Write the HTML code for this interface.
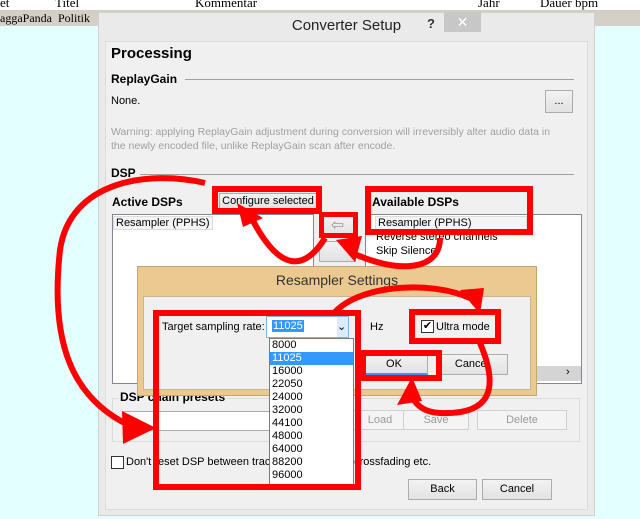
<!DOCTYPE html>
<html><head><meta charset="utf-8"><style>
*{margin:0;padding:0;box-sizing:border-box}
body{width:640px;height:519px;background:#e3ffff;position:relative;overflow:hidden;font-family:"Liberation Sans","DejaVu Sans",sans-serif;font-size:11px;color:#000}
.a{position:absolute;white-space:nowrap}
.btn{position:absolute;background:linear-gradient(#f2f2f2,#e2e2e2);border:1px solid #acacac;text-align:center;font-size:11px}
.dis{color:#9a9a9a;border-color:#d0d0d0;background:#f4f4f4}
.box{position:absolute;border:1px solid #828790;background:#fff}
.rb{position:absolute;border:6px solid #f00}
</style></head><body>
<div class="a" style="left:0;top:0;width:640px;height:11px;background:#fff;border-bottom:1px solid #ccc"></div>
<div class="a" style="left:0;top:-5px;font-family:'Liberation Serif',serif;font-size:13px">et</div>
<div class="a" style="left:55px;top:-5px;font-family:'Liberation Serif',serif;font-size:13px">Titel</div>
<div class="a" style="left:195px;top:-5px;font-family:'Liberation Serif',serif;font-size:13px">Kommentar</div>
<div class="a" style="left:478px;top:-5px;font-family:'Liberation Serif',serif;font-size:13px">Jahr</div>
<div class="a" style="left:540px;top:-5px;font-family:'Liberation Serif',serif;font-size:13px">Dauer bpm</div>
<div class="a" style="left:0;top:11px;width:640px;height:15px;background:#d4d0c8"></div>
<div class="a" style="left:0;top:11px;font-family:'Liberation Serif',serif;font-size:12px">aggaPanda&nbsp; Politik</div>

<div class="a" style="left:98px;top:12px;width:497px;height:504px;background:#eaeaea;border:1px solid #d0d0d0"></div>
<div class="a" style="left:98px;top:17px;width:497px;text-align:center;font-size:15px;color:#222">Converter Setup</div>
<div class="a" style="left:427px;top:16px;font-size:13px;font-weight:bold;color:#333">?</div>
<div class="a" style="left:444px;top:12px;width:37px;height:20px;background:#c7c7c7;color:#fff;text-align:center;font-size:14px;line-height:20px">✕</div>
<div class="a" style="left:105px;top:41px;width:483px;height:469px;background:#f0f0f0;border:1px solid #dcdcdc"></div>

<div class="a" style="left:111px;top:45px;font-size:15px;font-weight:bold">Processing</div>
<div class="a" style="left:111px;top:72px;font-size:12px;font-weight:bold">ReplayGain</div>
<div class="a" style="left:185px;top:79px;width:389px;height:1px;background:#a0a0a0"></div>
<div class="a" style="left:111px;top:95px">None.</div>
<div class="btn" style="left:545px;top:90px;width:28px;height:23px;line-height:20px">...</div>
<div class="a" style="left:111px;top:125px;color:#a0a0a0;font-size:10.5px;line-height:14px">Warning: applying ReplayGain adjustment during conversion will irreversibly alter audio data in<br>the newly encoded file, unlike ReplayGain scan after encode.</div>
<div class="a" style="left:111px;top:166px;font-size:12px;font-weight:bold">DSP</div>
<div class="a" style="left:140px;top:174px;width:434px;height:1px;background:#a0a0a0"></div>

<div class="a" style="left:112px;top:195px;font-size:12px;font-weight:bold">Active DSPs</div>
<div class="btn" style="left:219px;top:193px;width:98px;height:16px;line-height:14px">Configure selected</div>
<div class="a" style="left:372px;top:195px;font-size:12px;font-weight:bold">Available DSPs</div>
<div class="box" style="left:112px;top:214px;width:202px;height:170px"></div>
<div class="a" style="left:113px;top:216px;border:1px solid #ddd;background:#f4f4f4;padding:0 2px">Resampler (PPHS)</div>
<div class="box" style="left:365px;top:214px;width:217px;height:170px"></div>
<div class="a" style="left:375px;top:216px;width:152px;border:1px solid #ddd;background:#f4f4f4;padding:0 2px">Resampler (PPHS)</div>
<div class="a" style="left:376px;top:231px">Reverse stereo channels</div>
<div class="a" style="left:376px;top:245px">Skip Silence</div>
<div class="btn" style="left:319px;top:216px;width:37px;height:20px;color:#999;font-size:16px;line-height:17px">⇦</div>
<div class="btn" style="left:319px;top:241px;width:37px;height:21px"></div>
<div class="a" style="left:470px;top:366px;width:111px;height:15px;background:#d4d4d4"></div>
<div class="a" style="left:566px;top:366px;font-size:11px">›</div>

<div class="a" style="left:112px;top:398px;width:468px;height:44px;border:1px solid #dcdcdc"></div>
<div class="a" style="left:118px;top:390px;font-size:12px;font-weight:bold;background:#f0f0f0;padding:0 2px">DSP chain presets</div>
<div class="box" style="left:123px;top:411px;width:160px;height:20px;border-color:#abadb3"></div>
<div class="btn dis" style="left:350px;top:410px;width:60px;height:20px;line-height:18px">Load</div>
<div class="btn dis" style="left:403px;top:410px;width:66px;height:20px;line-height:18px">Save</div>
<div class="btn dis" style="left:477px;top:410px;width:90px;height:20px;line-height:18px">Delete</div>
<div class="a" style="left:111px;top:456px;width:13px;height:13px;border:1px solid #333;background:#fff"></div>
<div class="a" style="left:126px;top:456px">Don't reset DSP between tracks — needed for crossfading etc.</div>
<div class="btn" style="left:408px;top:479px;width:69px;height:21px;line-height:19px">Back</div>
<div class="btn" style="left:482px;top:479px;width:70px;height:21px;line-height:19px">Cancel</div>

<div class="a" style="left:137px;top:266px;width:400px;height:130px;background:#ebc991;border:1px solid #c4a673"></div>
<div class="a" style="left:137px;top:272px;width:400px;text-align:center;font-size:14px;color:#333">Resampler Settings</div>
<div class="a" style="left:143px;top:296px;width:388px;height:94px;background:#f0f0f0;border:1px solid #c8b590"></div>
<div class="a" style="left:162px;top:321px">Target sampling rate:</div>
<div class="a" style="left:266px;top:316px;width:83px;height:22px;background:#fff;border:1px solid #7eb4ea"></div>
<div class="a" style="left:272px;top:320px;background:#3399ff;color:#fff;padding:0 1px">11025</div>
<div class="a" style="left:337px;top:317px;width:11px;height:20px;background:#dcecfc;font-size:11px;line-height:20px">⌄</div>
<div class="a" style="left:370px;top:321px">Hz</div>
<div class="a" style="left:421px;top:320px;width:13px;height:13px;border:1px solid #333;background:#fff;font-size:11px;line-height:11px;text-align:center">✔</div>
<div class="a" style="left:436px;top:321px">Ultra mode</div>
<div class="btn" style="left:360px;top:354px;width:68px;height:21px;line-height:19px;border-bottom:2px solid #3399ff">OK</div>
<div class="btn" style="left:436px;top:354px;width:72px;height:21px;line-height:19px">Cancel</div>
<div class="a" style="left:269px;top:338px;width:85px;height:147px;background:#fff;border:1px solid #7a7a7a;font-size:11px;line-height:13px">
<div style="padding-left:2px">8000</div><div style="padding-left:2px;background:#3399ff;color:#fff">11025</div><div style="padding-left:2px">16000</div><div style="padding-left:2px">22050</div><div style="padding-left:2px">24000</div><div style="padding-left:2px">32000</div><div style="padding-left:2px">44100</div><div style="padding-left:2px">48000</div><div style="padding-left:2px">64000</div><div style="padding-left:2px">88200</div><div style="padding-left:2px">96000</div></div>

<div class="rb" style="left:212px;top:186px;width:110px;height:28px"></div>
<div class="rb" style="left:365px;top:186px;width:168px;height:49px"></div>
<div class="rb" style="left:319px;top:212px;width:39px;height:26px;border-width:5px"></div>
<div class="rb" style="left:153px;top:310px;width:208px;height:180px"></div>
<div class="rb" style="left:409px;top:309px;width:92px;height:35px"></div>
<div class="rb" style="left:360px;top:350px;width:82px;height:31px"></div>

<svg class="a" style="left:0;top:0" width="640" height="519" viewBox="0 0 640 519" fill="none" stroke="#f00" stroke-width="6">
<path d="M205 183 C150 170 70 180 60 250 C50 340 70 400 135 428"/>
<polygon points="122,411 156,428 123,444" fill="#f00" stroke="none"/>
<path d="M325 238 C305 270 280 275 250 215"/>
<polygon points="237,203 263,218 243,227" fill="#f00" stroke="none"/>
<path d="M440 238 C440 270 400 275 350 252"/>
<polygon points="336,240 362,236 355,262" fill="#f00" stroke="none"/>
<path d="M335 312 C360 285 430 280 470 298"/>
<polygon points="460,290 484,288 480,314" fill="#f00" stroke="none"/>
<path d="M480 343 C500 390 490 415 440 413 C420 412 410 400 412 388"/>
<polygon points="397,405 412,377 422,401" fill="#f00" stroke="none"/>
</svg>
</body></html>
